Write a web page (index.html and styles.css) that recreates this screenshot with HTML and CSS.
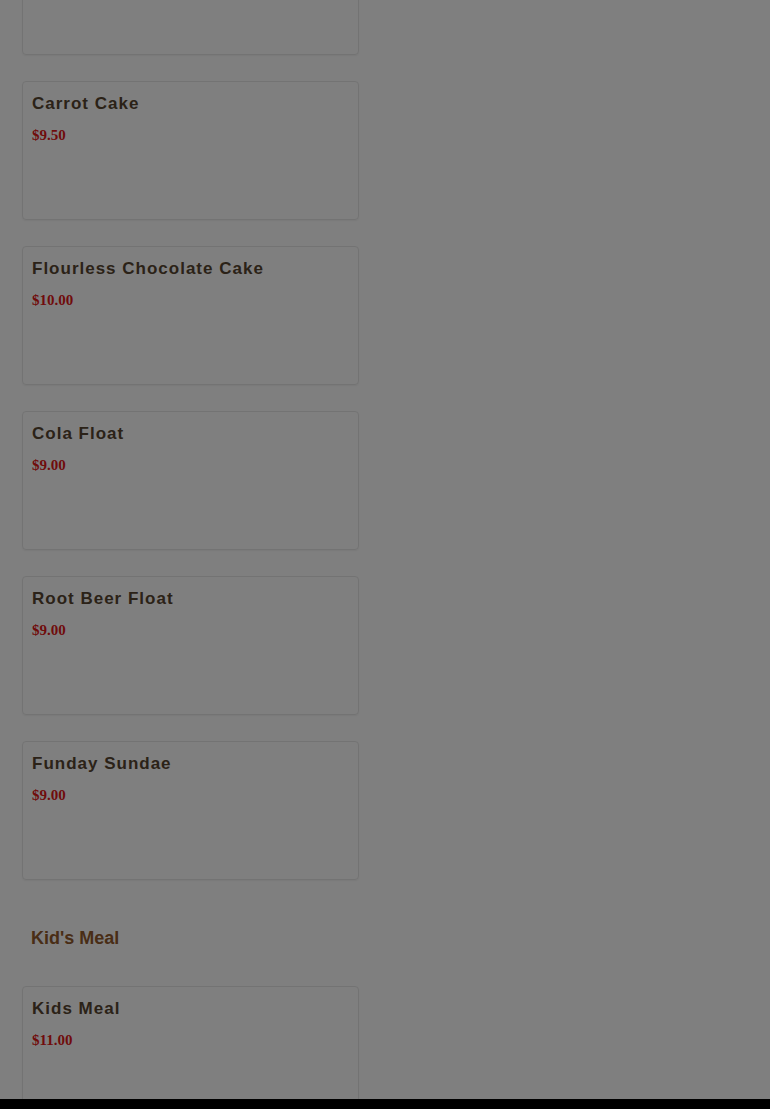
FILE: index.html
```html
<!DOCTYPE html>
<html lang="en">
<head>
  <meta charset="UTF-8">
  <title>Menu</title>
  <link rel="stylesheet" href="styles.css">
</head>
<body>

<!-- Menu list -->
<div class="menu">
  <!-- scrolled past, only the bottom edge shows -->
  <div class="item item-first"></div>

  <div class="item">
    <div class="item-name">Carrot Cake</div>
    <div class="item-price">$9.50</div>
  </div>

  <div class="item">
    <div class="item-name">Flourless Chocolate Cake</div>
    <div class="item-price">$10.00</div>
  </div>

  <div class="item">
    <div class="item-name">Cola Float</div>
    <div class="item-price">$9.00</div>
  </div>

  <div class="item">
    <div class="item-name">Root Beer Float</div>
    <div class="item-price">$9.00</div>
  </div>

  <div class="item">
    <div class="item-name">Funday Sundae</div>
    <div class="item-price">$9.00</div>
  </div>

  <h2 class="section-title">Kid's Meal</h2>

  <div class="item">
    <div class="item-name">Kids Meal</div>
    <div class="item-price">$11.00</div>
  </div>
</div>

<!-- Modal backdrop -->
<div class="backdrop"></div>
<div class="bottom-bar"></div>

</body>
</html>
```

FILE: styles.css
```css
body {
  margin: 0;
  background: #fff;
  height: 100vh;
  overflow: hidden;
  font-family: "Liberation Sans", Arial, sans-serif;
}

.menu {
  width: 337px;
  padding-left: 22px;
}

.item {
  box-sizing: border-box;
  height: 139px;
  margin-bottom: 26px;
  padding: 12px 9px 10px;
  border: 1px solid #e6e6e6;
  border-radius: 4px;
  box-shadow: 0 1px 2px rgba(0, 0, 0, 0.06);
}

.item-first {
  margin-top: -84px;
}

.item-name {
  font-size: 17px;
  line-height: 20px;
  font-weight: bold;
  letter-spacing: 1px;
  color: #574530;
}

.item-price {
  margin-top: 13px;
  font-family: "Liberation Serif", "Times New Roman", serif;
  font-size: 15px;
  line-height: 17px;
  font-weight: bold;
  color: #e01818;
}

.section-title {
  margin: 48px 0 37px 9px;
  font-size: 18px;
  line-height: 21px;
  font-weight: bold;
  color: #925a2c;
}

.backdrop {
  position: fixed;
  top: 0; left: 0;
  width: 100%;
  height: 100%;
  background: rgba(0, 0, 0, 0.5);
  z-index: 5;
}

.bottom-bar {
  position: fixed;
  left: 0; bottom: 0;
  width: 100%;
  height: 10px;
  background: #000;
  z-index: 6;
}
```
